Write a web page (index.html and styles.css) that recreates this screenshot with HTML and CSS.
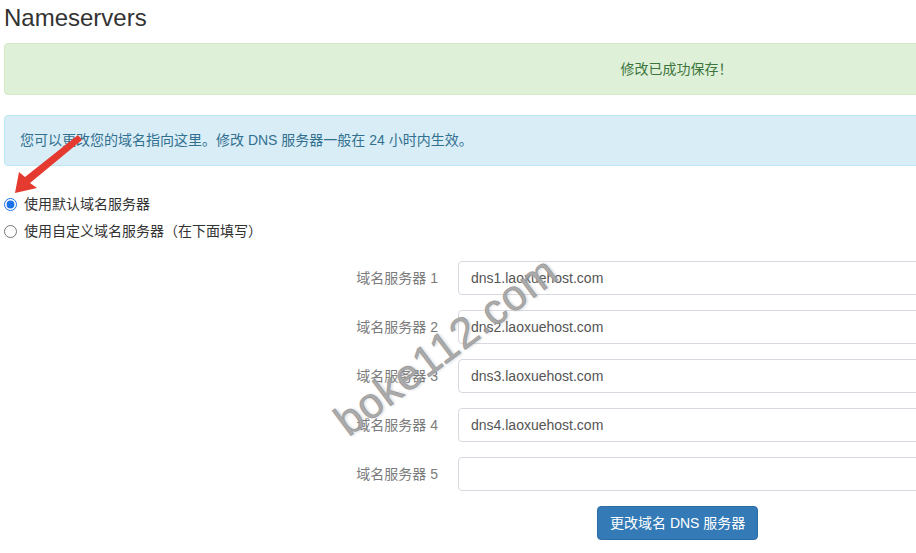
FILE: index.html
```html
<!DOCTYPE html>
<html lang="zh">
<head>
<meta charset="utf-8">
<title>Nameservers</title>
<link rel="stylesheet" href="styles.css">
</head>
<body>
<div class="viewport">
  <div class="page">
    <h2 class="title">Nameservers</h2>
    <div class="alert alert-success">修改已成功保存！</div>
    <div class="alert alert-info">您可以更改您的域名指向这里。修改 DNS 服务器一般在 24 小时内生效。</div>

    <div class="radios">
      <label class="radio"><input type="radio" name="ns" checked><span>使用默认域名服务器</span></label>
      <label class="radio"><input type="radio" name="ns"><span>使用自定义域名服务器（在下面填写）</span></label>
    </div>

    <form class="ns-form">
      <label class="ns-label">域名服务器 1</label>
      <input class="ns-input" type="text" value="dns1.laoxuehost.com">
      <label class="ns-label">域名服务器 2</label>
      <input class="ns-input" type="text" value="dns2.laoxuehost.com">
      <label class="ns-label">域名服务器 3</label>
      <input class="ns-input" type="text" value="dns3.laoxuehost.com">
      <label class="ns-label">域名服务器 4</label>
      <input class="ns-input" type="text" value="dns4.laoxuehost.com">
      <label class="ns-label">域名服务器 5</label>
      <input class="ns-input" type="text" value="">
      <div class="btn-row"><button type="button" class="btn">更改域名 DNS 服务器</button></div>
    </form>
  </div>

  <svg class="arrow" width="100" height="200" viewBox="0 0 100 200" aria-hidden="true">
    <polygon points="15,193 19,172 25,177 78,135 82,140 30,183 37,188" fill="#e53a2f"/>
  </svg>
  <div class="watermark">boke112.com</div>
</div>
</body>
</html>
```

FILE: styles.css
```css
html, body {
  margin: 0;
  padding: 0;
  background: #fff;
  overflow: hidden;
}

.viewport {
  position: relative;
  width: 916px;
  height: 553px;
  overflow: hidden;
}

.page {
  width: 1345px;
  padding-left: 4px;
  font-family: "Liberation Sans", "Noto Sans CJK SC", sans-serif;
  font-size: 14px;
  line-height: 20px;
  color: #333;
}

.title {
  margin: 5px 0 12px 0;
  font-size: 24px;
  line-height: 26px;
  font-weight: normal;
  color: #333;
}

.alert {
  padding: 15px;
  border: 1px solid transparent;
  border-radius: 4px;
  margin-bottom: 20px;
}

.alert-success {
  background: #dff0d8;
  border-color: #d6e9c6;
  color: #3c763d;
  text-align: center;
}

.alert-info {
  background: #d9edf7;
  border-color: #bce8f1;
  color: #31708f;
  padding-top: 14px;
  padding-bottom: 15px;
}

.radios {
  display: flex;
  flex-direction: column;
  gap: 7px;
  margin-top: 28px;
}

.radio {
  display: flex;
  align-items: center;
  gap: 7px;
  line-height: 20px;
  color: #333;
}

.radio input {
  margin: 0;
  width: 13px;
  height: 13px;
  accent-color: #1a73e8;
}

.ns-form {
  display: grid;
  grid-template-columns: 434px 1fr;
  column-gap: 20px;
  row-gap: 15px;
  margin-top: 20px;
  align-items: center;
}

.ns-label {
  text-align: right;
  color: #7b7b7b;
  font-size: 14px;
}

.ns-input {
  box-sizing: border-box;
  height: 34px;
  padding: 6px 12px;
  border: 1px solid #d8d8e0;
  border-radius: 4px;
  font-family: "Liberation Sans", "Noto Sans CJK SC", sans-serif;
  font-size: 14px;
  color: #555;
  background: #fff;
}

.btn-row {
  grid-column: 2;
  padding-left: 139px;
}

.btn {
  box-sizing: border-box;
  height: 34px;
  padding: 6px 12px;
  border: 1px solid #2e6da4;
  border-radius: 4px;
  background: #337ab7;
  color: #fff;
  font-family: "Liberation Sans", "Noto Sans CJK SC", sans-serif;
  font-size: 14px;
  line-height: 20px;
}

.arrow {
  position: absolute;
  left: 0;
  top: 0;
}

.watermark {
  position: absolute;
  left: 446px;
  top: 346px;
  transform: translate(-50%, -50%) rotate(-37deg);
  font-family: "Liberation Sans", sans-serif;
  font-size: 43px;
  line-height: 1;
  white-space: nowrap;
  color: rgba(115, 115, 115, 0.62);
  -webkit-text-stroke: 0.6px rgba(115, 115, 115, 0.5);
  text-shadow: 0 0 2px #fff, 1px 1px 3px rgba(0, 0, 0, 0.2);
  letter-spacing: 1px;
}
```
